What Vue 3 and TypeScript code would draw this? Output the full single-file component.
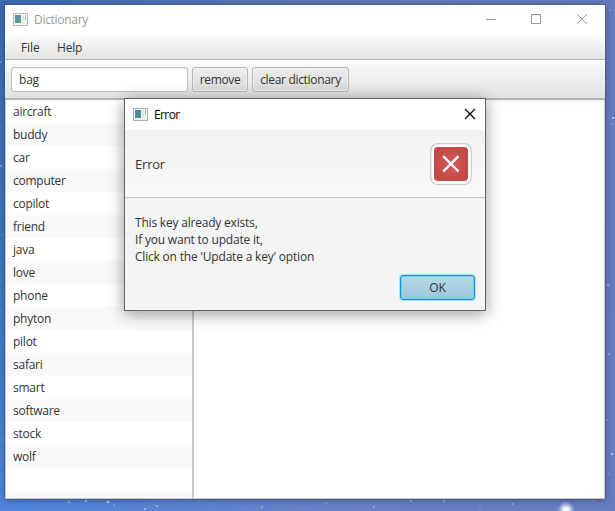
<script setup lang="ts">
interface Speck { x: number; y: number; r: number; o: number }

const words: string[] = [
  'aircraft', 'buddy', 'car', 'computer', 'copilot', 'friend', 'java', 'love',
  'phone', 'phyton', 'pilot', 'safari', 'smart', 'software', 'stock', 'wolf', '', '',
]
const message: string[] = [
  'This key already exists,',
  'If you want to update it,',
  "Click on the 'Update a key' option",
]
const specks: Speck[] = [
  { x: 1, y: 62, r: 0.8, o: 0.6 }, { x: 1, y: 166, r: 1, o: 0.5 }, { x: 3, y: 235, r: 0.7, o: 0.4 },
  { x: 3, y: 440, r: 0.8, o: 0.5 }, { x: 69, y: 502, r: 1, o: 0.6 }, { x: 86, y: 501, r: 1.1, o: 0.7 },
  { x: 108, y: 502, r: 1.3, o: 0.75 }, { x: 114, y: 505, r: 0.8, o: 0.5 }, { x: 145, y: 509, r: 0.9, o: 0.6 },
  { x: 157, y: 506, r: 1.1, o: 0.6 }, { x: 214, y: 504, r: 0.8, o: 0.4 }, { x: 262, y: 507, r: 0.9, o: 0.5 },
  { x: 326, y: 503, r: 0.8, o: 0.4 }, { x: 374, y: 507, r: 0.9, o: 0.5 }, { x: 411, y: 501, r: 1, o: 0.5 },
  { x: 444, y: 501, r: 1.1, o: 0.6 }, { x: 480, y: 506, r: 0.8, o: 0.4 }, { x: 513, y: 504, r: 0.9, o: 0.5 },
  { x: 594, y: 501, r: 0.8, o: 0.5 }, { x: 612, y: 454, r: 1.2, o: 0.6 }, { x: 609, y: 474, r: 0.8, o: 0.4 },
  { x: 610, y: 10, r: 0.8, o: 0.5 }, { x: 613, y: 118, r: 1.1, o: 0.7 }, { x: 612, y: 124, r: 0.8, o: 0.5 },
  { x: 608, y: 285, r: 1, o: 0.6 }, { x: 609, y: 354, r: 0.9, o: 0.5 }, { x: 607, y: 420, r: 0.8, o: 0.5 },
]
</script>

<template>
  <div class="desktop">
    <svg class="stars" width="615" height="511" viewBox="0 0 615 511">
      <defs>
        <radialGradient id="glow">
          <stop offset="0" stop-color="#fff" />
          <stop offset="0.35" stop-color="#f2f8ff" stop-opacity="0.9" />
          <stop offset="1" stop-color="#a9c8ff" stop-opacity="0" />
        </radialGradient>
      </defs>
      <circle v-for="(s, i) in specks" :key="i" :cx="s.x" :cy="s.y" :r="s.r" fill="#dff0f5" :opacity="s.o" />
      <circle cx="566" cy="510" r="9" fill="url(#glow)" />
    </svg>

    <main class="window">
      <header class="titlebar">
        <svg class="appicon faded" width="15" height="13" viewBox="0 0 15 13">
          <defs>
            <linearGradient id="tile" x1="0" y1="0" x2="1" y2="1">
              <stop offset="0" stop-color="#4b7fa0" />
              <stop offset="1" stop-color="#4f9c78" />
            </linearGradient>
          </defs>
          <rect x="0.5" y="0.5" width="14" height="12" fill="#f1f3f5" stroke="#a9b0b8" />
          <rect x="2" y="2" width="6" height="8" fill="url(#tile)" />
          <rect x="9" y="2" width="2" height="8" fill="#e2e6e8" />
          <rect x="12" y="2" width="1" height="5" fill="#8dbba8" />
        </svg>
        <span class="caption">Dictionary</span>
        <svg class="controls" width="104" height="12" viewBox="0 0 104 12" fill="none" stroke="#999">
          <path d="M1 6.5H11" />
          <rect x="46.5" y="1.5" width="9" height="9" />
          <path d="M92 1L102 11M102 1L92 11" />
        </svg>
      </header>
      <nav class="menubar"><span class="file">File</span><span class="help">Help</span></nav>
      <section class="toolbar">
        <div class="field">bag</div>
        <button class="btn remove">remove</button>
        <button class="btn clear">clear dictionary</button>
      </section>
      <section class="body">
        <ul class="list"><li v-for="(w, i) in words" :key="i">{{ w }}</li></ul>
        <div class="detail"></div>
      </section>
    </main>

    <section class="dialog">
      <header class="dialog-title">
        <svg class="appicon" width="15" height="13" viewBox="0 0 15 13">
          <rect x="0.5" y="0.5" width="14" height="12" fill="#f1f3f5" stroke="#a9b0b8" />
          <rect x="2" y="2" width="6" height="8" fill="url(#tile)" />
          <rect x="9" y="2" width="2" height="8" fill="#e2e6e8" />
          <rect x="12" y="2" width="1" height="5" fill="#8dbba8" />
        </svg>
        <span class="dialog-caption">Error</span>
        <svg class="close" width="12" height="12" viewBox="0 0 12 12" fill="none" stroke="#000" stroke-width="1.2">
          <path d="M1 1L11 11M11 1L1 11" />
        </svg>
      </header>
      <div class="dialog-head">
        <span class="heading">Error</span>
        <svg class="erroricon" width="42" height="43" viewBox="0 0 42 43">
          <defs>
            <radialGradient id="red"><stop offset="0" stop-color="#d75a5a" /><stop offset="1" stop-color="#c04b46" /></radialGradient>
          </defs>
          <rect x="0.7" y="0.7" width="40.6" height="40.8" rx="7" fill="#fff" stroke="#c9c9c9" stroke-width="1.2" />
          <rect x="4" y="4" width="34" height="34" rx="4" fill="url(#red)" />
          <path d="M13.2 13.2L28.5 28.5M28.5 13.2L13.2 28.5" stroke="#fff" stroke-width="2.4" />
        </svg>
      </div>
      <div class="dialog-body">
        <div class="message"><p v-for="(m, i) in message" :key="i">{{ m }}</p></div>
        <button class="ok">OK</button>
      </div>
    </section>
  </div>
</template>

<style>
html, body { margin: 0; overflow: hidden; }
</style>

<style scoped>
* { box-sizing: border-box; }
.desktop {
  position: relative;
  width: 615px;
  height: 511px;
  padding: 5px;
  overflow: hidden;
  background:
    linear-gradient(90deg, transparent 0, rgba(118, 125, 185, 0.7) 60%, rgba(106, 124, 187, 0.9) 100%),
    linear-gradient(#3a6cb4 0, #3f78c4 50%, #4f86dd 100%);
  font: 12px/17px "Open Sans", "Noto Sans", sans-serif;
  color: #333;
}
.stars { position: absolute; left: 0; top: 0; }
.window {
  position: relative;
  display: flex;
  flex-direction: column;
  width: 600px;
  height: 494px;
  background: #fff;
  box-shadow: 0 0 0 1px rgba(65, 75, 100, 0.35), 0 1px 7px rgba(10, 20, 60, 0.4);
}
.titlebar { display: flex; align-items: center; height: 31px; padding: 0 16px 2px 8px; }
.appicon { flex: none; }
.faded { opacity: 0.9; }
.caption { margin-left: 6px; color: #999; letter-spacing: -0.3px; }
.controls { margin-left: auto; margin-top: -1px; }
.menubar {
  display: flex;
  height: 24px;
  padding: 3px 16px 0;
  border-bottom: 1px solid #b5b5b5;
  background: linear-gradient(#fbfbfb, #e3e3e3);
}
.file { width: 36px; letter-spacing: -0.1px; }
.help { letter-spacing: -0.2px; }
.toolbar {
  display: flex;
  gap: 4px;
  height: 40px;
  padding: 7px 6px;
  border-bottom: 2px solid #b5b5b5;
  background: linear-gradient(#fafafa, #e1e1e1);
}
.field {
  width: 177px;
  height: 25px;
  padding: 3px 7px;
  border: 1px solid #c0c0c0;
  border-radius: 3px;
  background: linear-gradient(#f1f1f1, #fff 4px);
  letter-spacing: -0.2px;
}
.btn {
  height: 25px;
  padding: 0 0 1px;
  border: 1px solid #b5b5b5;
  border-radius: 3px;
  background: linear-gradient(#ececec, #d9d9d9);
  box-shadow: inset 0 0 0 1px #f0f0f0;
  font: inherit;
  color: #333;
}
.remove { width: 56px; letter-spacing: -0.35px; }
.clear { width: 97px; letter-spacing: -0.32px; }
.body { display: flex; flex: 1; min-height: 0; border: 1px solid #c8c8c8; border-top-width: 0; }
.list {
  width: 188px;
  margin: 0;
  padding: 0;
  overflow: hidden;
  border-right: 2px solid #c8c8c8;
  list-style: none;
  letter-spacing: -0.25px;
}
.list li { height: 23px; padding: 3px 7px 0; }
.list li:nth-child(even) { background: #f9f9f9; }
.detail { flex: 1; background: linear-gradient(#f3f3f3, #fff 5px); }
.dialog {
  position: absolute;
  left: 124px;
  top: 98px;
  width: 362px;
  height: 213px;
  border: 1px solid #656565;
  background: #f4f4f4;
  box-shadow: 0 3px 15px rgba(0, 0, 0, 0.4);
}
.dialog-title { display: flex; align-items: center; height: 31px; padding: 0 9px 1px 8px; background: #fff; }
.dialog-caption { margin-left: 6px; color: #000; letter-spacing: -0.6px; }
.close { margin-left: auto; margin-top: -1px; }
.dialog-head {
  display: flex;
  align-items: center;
  justify-content: space-between;
  height: 68px;
  padding: 1px 13px 0 10px;
  border-bottom: 1px solid #c5c5c5;
  background: linear-gradient(#f1f1f1, #fafafa);
}
.heading { padding-top: 1px; font-size: 13px; letter-spacing: -0.2px; }
.erroricon { margin-top: 1px; }
.dialog-body { display: flex; flex-direction: column; height: 113px; padding: 16px 10px 11px; }
.message { flex: 1; }
.message p { margin: 0; white-space: pre; letter-spacing: -0.2px; }
.ok {
  align-self: flex-end;
  width: 75px;
  height: 25px;
  padding: 0;
  border: 1px solid #039ed3;
  border-radius: 3px;
  background: linear-gradient(#b7dbe9, #9bc5db);
  box-shadow: 0 0 0 1px #b0e1f1, inset 0 0 0 1px #83c7df;
  font: inherit;
  color: #333;
}
</style>
